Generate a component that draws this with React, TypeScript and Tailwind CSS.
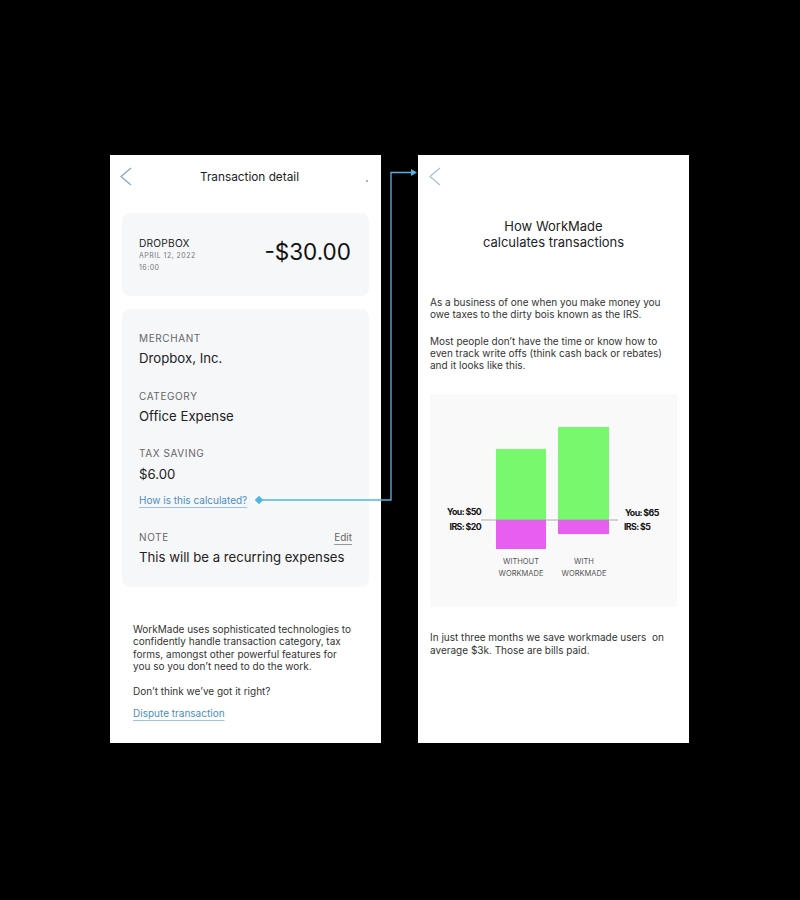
import React from "react"

const font = { fontFamily: "Inter, 'Noto Sans', sans-serif" }

function Chevron({ color }: { color: string }) {
  return (
    <svg width="12" height="19" viewBox="0 0 12 19" fill="none">
      <polyline points="11,1 1,9.5 11,18" stroke={color} strokeWidth="1.2" />
    </svg>
  )
}

function Label({ children }: { children: React.ReactNode }) {
  return <p className="text-[10px] leading-[14px] uppercase tracking-[0.06em] text-[#666]">{children}</p>
}

function Value({ children }: { children: React.ReactNode }) {
  return <p className="text-[13.2px] leading-[18px] text-[#222]">{children}</p>
}

function TransactionScreen() {
  return (
    <section className="w-[271px] h-[588px] bg-white flex flex-col">
      <header className="relative h-[42px] flex items-center justify-center pl-[8px] pt-[3px]">
        <div className="absolute left-[10px] top-[12px]">
          <Chevron color="#7ea7c6" />
        </div>
        <h1 className="text-[11.8px] text-[#222]">Transaction detail</h1>
        <span className="absolute right-[13px] top-[25px] w-[2px] h-[2px] rounded-full bg-[#999]" />
      </header>

      <div className="mx-[12px] mt-[16px] h-[83px] rounded-[8px] bg-[#f6f7f9] px-[17px] flex items-center justify-between">
        <div>
          <p className="text-[10.2px] leading-[14px] text-[#222] tracking-[0.02em]">DROPBOX</p>
          <p className="text-[7px] leading-[12px] text-[#777] tracking-[0.07em]">APRIL 12, 2022</p>
          <p className="text-[7px] leading-[12px] text-[#777] tracking-[0.07em]">16:00</p>
        </div>
        <p className="text-[22.5px] leading-[28px] text-[#111] mb-[6px] mr-[1px]">-$30.00</p>
      </div>

      <div className="mx-[12px] mt-[13px] h-[278px] rounded-[8px] bg-[#f6f7f9] px-[17px] pt-[22px]">
        <Label>Merchant</Label>
        <div className="mt-[4px]"><Value>Dropbox, Inc.</Value></div>
        <div className="mt-[22px]"><Label>Category</Label></div>
        <div className="mt-[4px]"><Value>Office Expense</Value></div>
        <div className="mt-[21px]"><Label>Tax saving</Label></div>
        <div className="mt-[5px]"><Value>$6.00</Value></div>
        <p className="mt-[10px] text-[10px] leading-[14px] text-[#4a8ec4] underline decoration-[#9cc3e2] underline-offset-[3px]">
          How is this calculated?
        </p>
        <div className="mt-[23px] flex justify-between">
          <Label>Note</Label>
          <span className="text-[10px] leading-[14px] text-[#666] underline decoration-[#999] underline-offset-[3px]">Edit</span>
        </div>
        <div className="mt-[4px]"><Value>This will be a recurring expenses</Value></div>
      </div>

      <div className="mx-[23px] mt-[36px] text-[10px] leading-[12.4px] text-[#333]">
        <p className="w-[221px]">
          WorkMade uses sophisticated technologies to confidently handle transaction category, tax forms, amongst other powerful features for you so you don’t need to do the work.
        </p>
        <p className="mt-[12px]">Don’t think we’ve got it right?</p>
        <p className="mt-[10px] text-[#4a8ec4] underline decoration-[#9cc3e2] underline-offset-[3px]">Dispute transaction</p>
      </div>
    </section>
  )
}

function Chart() {
  return (
    <div className="mx-[12px] mt-[23px] h-[213px] bg-[#f9f9f9]">
      <svg width="245" height="213" viewBox="0 0 245 213" style={font}>
        <rect x="66" y="55" width="50" height="71" fill="#78f96d" />
        <rect x="66" y="126" width="50" height="29" fill="#e75ef0" />
        <rect x="128" y="33" width="51" height="93" fill="#78f96d" />
        <rect x="128" y="126" width="51" height="14" fill="#e75ef0" />
        <line x1="51" y1="126" x2="188" y2="126" stroke="#9a9a9a" strokeWidth="0.8" />
        <g fontSize="8.8" fontWeight="700" fill="#111" letterSpacing="-0.6">
          <text x="51" y="121" textAnchor="end">You: $50</text>
          <text x="51" y="136" textAnchor="end">IRS: $20</text>
          <text x="195" y="122">You: $65</text>
          <text x="194" y="136">IRS: $5</text>
        </g>
        <g fontSize="7.5" fill="#555" textAnchor="middle">
          <text x="91" y="170">WITHOUT</text>
          <text x="91" y="182">WORKMADE</text>
          <text x="154" y="170">WITH</text>
          <text x="154" y="182">WORKMADE</text>
        </g>
      </svg>
    </div>
  )
}

function HowScreen() {
  return (
    <section className="w-[271px] h-[588px] bg-white flex flex-col">
      <header className="relative h-[42px]">
        <div className="absolute left-[11px] top-[12px]">
          <Chevron color="#a9bfcf" />
        </div>
      </header>
      <h2 className="mt-[21px] text-center text-[13px] leading-[16px] text-[#222]">
        How WorkMade
        <br />
        calculates transactions
      </h2>
      <div className="mx-[12px] mt-[46px] text-[10px] leading-[12.3px] text-[#333]">
        <p>As a business of one when you make money you owe taxes to the dirty bois known as the IRS.</p>
        <p className="mt-[14px]">
          Most people don’t have the time or know how to even track write offs (think cash back or rebates) and it looks like this.
        </p>
      </div>
      <Chart />
      <p className="mx-[12px] mt-[24px] text-[10px] leading-[12.3px] text-[#333]">
        In just three months we save workmade users&nbsp; on average $3k. Those are bills paid.
      </p>
    </section>
  )
}

export default function App() {
  return (
    <div className="relative w-[800px] h-[900px] bg-black pt-[155px] pl-[110px] flex gap-[37px]" style={font}>
      <TransactionScreen />
      <HowScreen />
      <svg className="absolute inset-0 pointer-events-none" width="800" height="900">
        <rect x="256" y="497" width="6" height="6" fill="#4fb6e4" transform="rotate(45 259 500)" />
        <polyline points="262,500 391,500 391,172.5 411,172.5" fill="none" stroke="#4fb6e4" strokeWidth="1.3" />
        <polygon points="411,169 417,172.5 411,176" fill="#4fb6e4" />
      </svg>
    </div>
  )
}
